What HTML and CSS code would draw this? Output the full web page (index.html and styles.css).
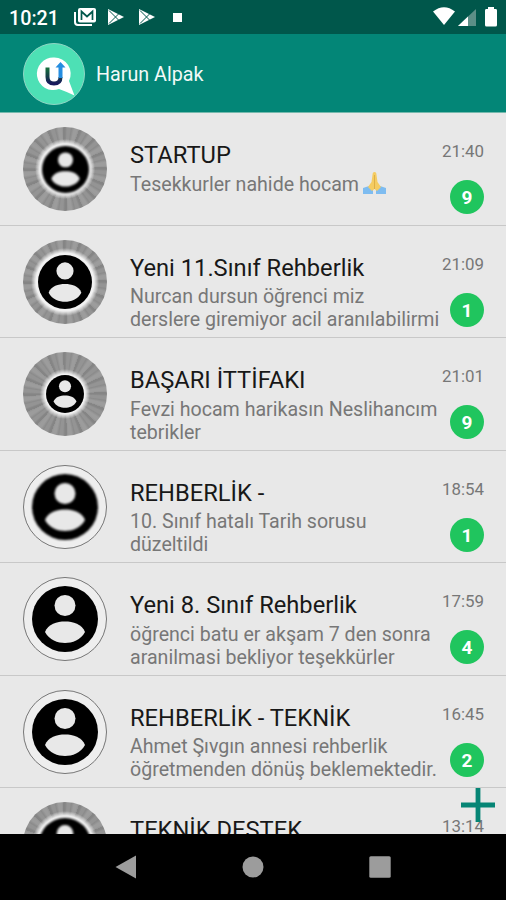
FILE: index.html
```html
<!DOCTYPE html>
<html lang="tr">
<head>
<meta charset="utf-8">
<title>Harun Alpak</title>
<link rel="stylesheet" href="styles.css">
</head>
<body>
<svg class="defs" aria-hidden="true">
  <defs>
    <symbol id="play" viewBox="0 0 18 18"><path d="M1 1v16L17 9z" fill="#fff"/><path d="M2 2.500l9.500 9.500M2 15.500l9.500-9.500" stroke="#00574b" stroke-width="1" fill="none"/></symbol>
    <symbol id="face" viewBox="-33 -33 66 66">
      <circle r="33"/>
      <circle cy="-13.500" r="10.500" fill="#e8e8e8"/>
      <path d="M-20 13C-17 5-8 2.500 0 2.500S17 5 20 13C16 21 7 24 0 24S-16 21-20 13z" fill="#e8e8e8"/>
    </symbol>
  </defs>
</svg>
<div class="phone">
  <header class="status">
    <span class="clock">10:21</span>
    <svg class="mail" viewBox="0 0 24 20"><path d="M2 5v10q0 3 3 3h14" fill="none" stroke="#fff" stroke-width="2"/><rect x="5" y="1" width="18" height="14.500" rx="2" fill="#fff"/><path d="M8.500 13V4.500l5.500 5 5.500-5V13" fill="none" stroke="#00574b" stroke-width="1.700"/></svg>
    <svg class="play"><use href="#play"/></svg>
    <svg class="play second"><use href="#play"/></svg>
    <span class="stop"></span>
    <svg class="signals" viewBox="0 0 66 20"><path d="M0 4.500Q11-4 22 4.500L11 18z" fill="#fff"/><path d="M25 19L43 2v17z" fill="#5c8f87"/><path d="M25 19l10-9.400V19z" fill="#fff"/><path d="M53 2h2V0h6v2h2q1 0 1 1.500V18q0 1.500-1.500 1.500h-9Q52 19.500 52 18V3.500Q52 2 53 2z" fill="#fff"/></svg>
  </header>
  <div class="toolbar">
    <svg class="logo" viewBox="0 0 62 62">
      <defs><linearGradient id="u" x1="0" y1="0" x2="0" y2="1"><stop offset="0" stop-color="#15723b"/><stop offset=".6" stop-color="#173c4a"/><stop offset="1" stop-color="#17195c"/></linearGradient></defs>
      <circle cx="31" cy="31" r="30.500" fill="#4de0b5" stroke="#8fd6c4" stroke-width="1"/>
      <path d="M31 14.500a16.300 16.300 0 1 0 5 31.500Q43 48.500 51.500 52.500Q49 46 46 38A16.300 16.300 0 0 0 31 14.500z" fill="#fff"/>
      <path d="M24.500 24.500V34q0 6.500 6.500 6.500T37.500 34" fill="none" stroke="url(#u)" stroke-width="4"/>
      <path d="M35.500 35V24.500H32.500L37.500 19l5 5.500H39.500V35z" fill="#258de0"/>
    </svg>
    <h1>Harun Alpak</h1>
  </div>
  <main class="list">
    <article class="chat">
      <div class="avatar rays"><svg class="face s23"><use href="#face"/></svg></div>
      <div class="body"><h2>STARTUP</h2><p>Tesekkurler nahide hocam <svg class="pray" viewBox="0 0 23 23"><path d="M0 16l6-2 4 3v5H0zM23 16l-6-2-4 3v5h10z" fill="#7ebcf0"/><path d="M11.500 0Q9.500 0 9.500 3L8.500 10 5 15l4 4 2.500-2 2.500 2 4-4-3.500-5-1-7Q13.500 0 11.500 0z" fill="#f5cc62"/><path d="M11.500 3v14" stroke="#d8a840" stroke-width=".8"/></svg></p></div>
      <div class="meta"><time>21:40</time><span class="badge">9</span></div>
    </article>
    <article class="chat">
      <div class="avatar rays"><svg class="face s27"><use href="#face"/></svg></div>
      <div class="body"><h2>Yeni 11.Sınıf Rehberlik</h2><p>Nurcan dursun öğrenci miz<br>derslere giremiyor acil aranılabilirmi</p></div>
      <div class="meta"><time>21:09</time><span class="badge">1</span></div>
    </article>
    <article class="chat">
      <div class="avatar rays"><svg class="face s19"><use href="#face"/></svg></div>
      <div class="body"><h2>BAŞARI İTTİFAKI</h2><p>Fevzi hocam harikasın Neslihancım<br>tebrikler</p></div>
      <div class="meta"><time>21:01</time><span class="badge">9</span></div>
    </article>
    <article class="chat">
      <div class="avatar ring"><svg class="face soft"><use href="#face"/></svg></div>
      <div class="body"><h2>REHBERLİK -</h2><p>10. Sınıf hatalı Tarih sorusu<br>düzeltildi</p></div>
      <div class="meta"><time>18:54</time><span class="badge">1</span></div>
    </article>
    <article class="chat">
      <div class="avatar ring"><svg class="face"><use href="#face"/></svg></div>
      <div class="body"><h2>Yeni 8. Sınıf Rehberlik</h2><p>öğrenci batu er akşam 7 den sonra<br>aranilmasi bekliyor teşekkürler</p></div>
      <div class="meta"><time>17:59</time><span class="badge">4</span></div>
    </article>
    <article class="chat">
      <div class="avatar ring"><svg class="face"><use href="#face"/></svg></div>
      <div class="body"><h2>REHBERLİK - TEKNİK</h2><p>Ahmet Şıvgın annesi rehberlik<br>öğretmenden dönüş beklemektedir.</p></div>
      <div class="meta"><time>16:45</time><span class="badge">2</span></div>
    </article>
    <article class="chat">
      <div class="avatar rays"><svg class="face s25"><use href="#face"/></svg></div>
      <div class="body"><h2>TEKNİK DESTEK</h2></div>
      <div class="meta"><time>13:14</time></div>
    </article>
    <svg class="add" viewBox="0 0 34 34"><path d="M17 0v34M0 17h34" stroke="#068575" stroke-width="4.800"/></svg>
  </main>
  <nav class="nav">
    <svg viewBox="0 0 24 24"><path d="M1.500 12L22 .5v23z"/></svg>
    <svg viewBox="0 0 24 24"><circle cx="12" cy="12" r="10.500"/></svg>
    <svg viewBox="0 0 24 24"><rect x="1.300" y="1.300" width="21.400" height="21.400" rx="1.500"/></svg>
  </nav>
</div>
</body>
</html>
```

FILE: styles.css
```css
* { box-sizing: border-box; }
body { margin: 0; font-family: Roboto, "Liberation Sans", sans-serif; background: #000; }
h1, h2, p { margin: 0; font-weight: 400; white-space: nowrap; }
.defs { position: absolute; width: 0; height: 0; }
.phone { width: 506px; height: 900px; display: flex; flex-direction: column; overflow: hidden; }
.status { height: 34px; flex: none; background: #00574b; display: flex; align-items: center; padding: 0 7px 0 9px; color: #fff; }
.clock { font-size: 19.7px; font-weight: 500; width: 64px; padding-top: 2px; }
.mail { width: 24px; height: 20px; }
.play { width: 18px; height: 18px; margin-left: 10px; }
.second { margin-left: 13px; }
.stop { width: 9px; height: 9px; background: #fff; margin-left: 17px; }
.signals { width: 66px; height: 20px; margin-left: auto; }
.toolbar { height: 79px; flex: none; background: #038677; display: flex; align-items: center; padding: 1px 0 0 23px; gap: 11px; border-bottom: 1px solid #75b9ad; }
.logo { width: 62px; height: 62px; }
h1 { font-size: 19.7px; color: #f2faf8; padding-top: 1px; }
.list { flex: 1; min-height: 0; overflow: hidden; background: #e8e8e8; position: relative; }
.chat { height: 112.5px; display: grid; grid-template-columns: 107px minmax(0, 1fr) 45px; padding: 14px 22px 0 23px; border-bottom: 1.5px solid #c8c8c8; }
.avatar { width: 84px; height: 84px; border-radius: 50%; display: grid; place-items: center; }
.rays {
  --r: 25px;
  background:
    radial-gradient(circle, #f2f2f2 0 var(--r), transparent calc(var(--r) + 5px)),
    repeating-conic-gradient(from -3deg, #858585 0 3deg, #949494 6deg 10deg, #8b8b8b 12deg, #9c9c9c 16deg 20deg, #939393 22.5deg);
}
.rays:has(.s27) { --r: 29px; }
.rays:has(.s19) { --r: 20px; }
.rays:has(.s25) { --r: 28px; }
.ring { border: 1px solid #777; background: #eee; }
.face { width: 66px; height: 66px; filter: blur(.6px); }
.soft { filter: blur(1.3px); }
.s19 { width: 38px; height: 38px; }
.s23 { width: 47px; height: 47px; filter: blur(1px); }
.s25 { width: 52px; height: 52px; filter: blur(1px); }
.s27 { width: 54px; height: 54px; }
.body { padding-top: 13px; }
h2 { font-size: 23.7px; line-height: 30px; color: #181818; }
p { font-size: 19.6px; line-height: 23px; color: #777; padding-top: 2.5px; }
.pray { width: 23px; height: 23px; vertical-align: -4px; margin: -3px 0 0 -1px; }
.meta { display: flex; flex-direction: column; align-items: flex-end; padding-top: 14px; color: #777; }
time { font-size: 16.9px; line-height: 20px; }
.badge { width: 34px; height: 34px; margin-top: 19px; border-radius: 50%; background: #20c55e; color: #fff; font-size: 19px; font-weight: 700; line-height: 35px; text-align: center; }
.add { position: absolute; left: 461px; top: 675px; width: 34px; height: 34px; }
.nav { height: 66px; flex: none; background: #000; display: flex; justify-content: center; gap: 103px; align-items: center; fill: #9c9c9c; }
.nav svg { width: 24px; height: 24px; }
```
